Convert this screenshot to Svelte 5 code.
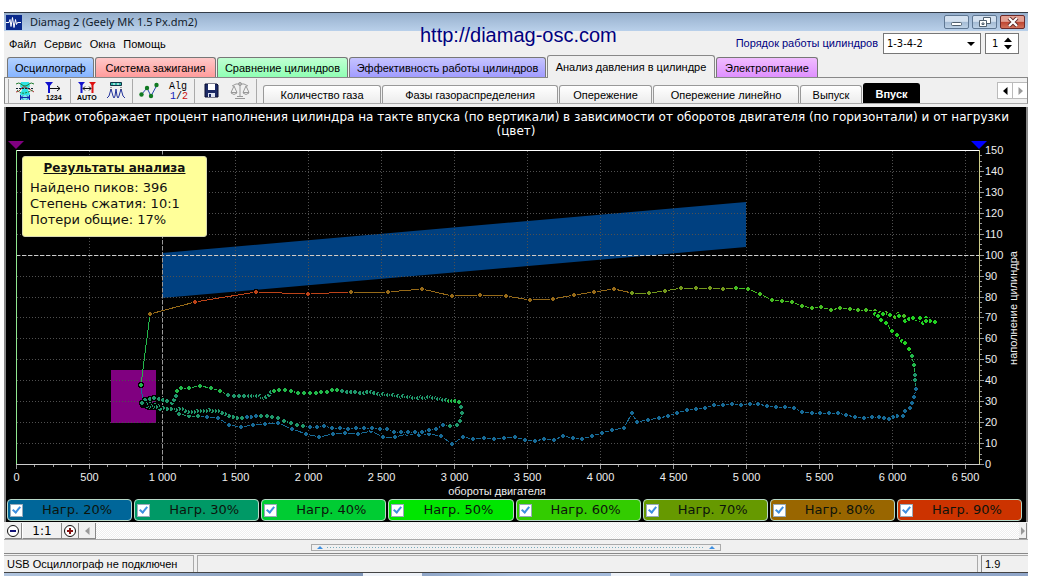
<script>
  let activeTab = $state('Анализ давления в цилиндре');
  let activeView = $state('Впуск');
  let firingOrder = $state('1-3-4-2');
  let cylinder = $state(1);

  const menu = ['Файл', 'Сервис', 'Окна', 'Помощь'];

  const tabs = [
    { name: 'Осциллограф', tone: 'blue', width: 87 },
    { name: 'Система зажигания', tone: 'red', width: 121 },
    { name: 'Сравнение цилиндров', tone: 'green', width: 131 },
    { name: 'Эффективность работы цилиндров', tone: 'violet', width: 197 },
    { name: 'Анализ давления в цилиндре', tone: 'plain', width: 168 },
    { name: 'Электропитание', tone: 'pink', width: 102 }
  ];

  const views = [
    { name: 'Количество газа', width: 118 },
    { name: 'Фазы газораспределения', width: 176 },
    { name: 'Опережение', width: 93 },
    { name: 'Опережение линейно', width: 146 },
    { name: 'Выпуск', width: 62 },
    { name: 'Впуск', width: 57 }
  ];

  let loads = $state([
    { value: 20, color: '#006699', on: true },
    { value: 30, color: '#009966', on: true },
    { value: 40, color: '#00cc33', on: true },
    { value: 50, color: '#00e600', on: true },
    { value: 60, color: '#33cc00', on: true },
    { value: 70, color: '#669900', on: true },
    { value: 80, color: '#996600', on: true },
    { value: 90, color: '#cc3300', on: true }
  ]);

  const dotColors = {
    20: '#176a96',
    30: '#1f966a',
    40: '#22b84a',
    50: '#22d022',
    60: '#46bd22',
    70: '#74991c',
    80: '#976a18',
    90: '#bd4318'
  };

  // each run: load %, then x,y pairs in drawing units
  const acceleration = [
    [20, '143,403'],
    [40, '141,385'],
    [80, '150,314'],
    [90, '195,302 256,292 308,294'],
    [80, '351,292 388,292 422,289 452,296 480,295 506,296 530,300 553,299 574,295 594,292 614,289'],
    [70, '632,293 649,293 665,291 681,288 696,288 710,288 723,289'],
    [60, '736,288 748,289 760,294 772,300 782,301 792,302 802,306 812,308 821,307 831,310 840,308 850,309 858,310 866,310 875,311 880,313 882,316 886,313 891,316 895,317 898,314 900,316 904,316'],
    [50, '905,321 909,319 914,317 916,319 919,318 921,321 923,323 926,318 927,322 930,321 935,322 926,321 920,318 913,318 899,316 890,315 883,314 875,314 878,316 881,320 886,323 892,331 897,335 902,341'],
    [50, '905,343 909,349'],
    [40, '912,356 914,365'],
    [30, '915,375 915,380'],
    [20, '916,389 914,397 912,403 910,408 905,411 903,416 897,416 893,417 889,419 884,418 879,417 872,417 864,418 855,417 846,415 838,413 829,413 820,413 812,413 802,412 794,408 785,407 776,407 767,406 758,404 750,404 741,405 732,404 723,405 714,405 705,408 696,409 687,410 677,413 668,416 659,418 648,420 637,422 632,413 624,428 612,430 602,433 592,436 582,439 573,438 563,436 554,440 544,439 535,441 525,440 515,437 504,438 494,439 484,438 473,439 463,437 452,444 441,436 429,434 419,435 407,434 395,437 383,437 371,431 358,434 345,433 333,434 319,437 306,434 292,429 278,423 265,424 253,425 241,427 229,425 218,418 207,417'],
    [30, '198,416 189,416 179,414 175,410 170,409 163,408 155,405 149,402 146,405']
  ];

  const partLoad = [
    [30, '143,405 145,400 150,399 154,398 159,399 163,400 167,401 172,403 174,400 176,396'],
    [40, '177,391 181,388 189,388 200,386 211,388 220,391'],
    [30, '228,395 234,396 239,396 244,396 249,396 252,396 255,396 257,396 260,396 262,398 264,398 266,397 269,395 271,392'],
    [40, '274,391 279,390 285,390 291,391 298,393 304,393 310,393 316,393 321,392 327,392 332,390 337,390'],
    [30, '342,391 347,392 351,392 355,392 360,393 364,393 367,392 371,392 374,393 378,394 381,395 383,394 386,395 388,395 391,395 393,395 396,396 398,396 401,397 403,396 406,397 408,397 411,397 413,398 416,398 418,398 421,397 423,398 426,398 428,397 431,397 433,398 436,398 438,399 441,399 443,400 446,400'],
    [40, '449,401 452,401 455,401 459,402'],
    [30, '461,407 462,413 460,421 457,425 450,426'],
    [20, '443,425 436,429 429,430 422,432 415,432 408,432 401,432 394,432 387,429 380,429 372,428 364,428 356,428 348,429 340,428 332,428 324,426 317,427 310,427'],
    [30, '303,426 297,425 291,423 284,421 278,418 272,417 267,416 261,416'],
    [20, '256,416 251,417 247,417'],
    [30, '242,418 237,418 233,417 229,416 225,414 222,413 218,411 215,411 212,411 209,410 206,411 203,411 200,411 197,411 194,412 191,412 188,412 185,411 182,409 179,409 176,410 173,409 171,409 167,409 163,408 160,409 158,406 156,407 153,407 151,406 149,407 147,406 146,404 144,405 143,404 142,403']
  ];

  function expand(runs) {
    return runs.flatMap(([load, pairs]) =>
      pairs.split(' ').map((pair) => {
        const [x, y] = pair.split(',').map(Number);
        return { x, y, load };
      })
    );
  }

  const traces = [expand(acceleration), expand(partLoad)];

  const px = (rpm) => Math.round(16 + rpm * 0.146) + 0.5;
  const py = (percent) => Math.round(464 - percent * 2.093) + 0.5;
  const spaced = (n) => (n >= 1000 ? `${Math.floor(n / 1000)} ${String(n % 1000).padStart(3, '0')}` : n);

  const xTicks = Array.from({ length: 14 }, (_, i) => i * 500);
  const xMinor = Array.from({ length: 53 }, (_, i) => i * 125);
  const yTicks = Array.from({ length: 16 }, (_, i) => i * 10);
  const yMinor = Array.from({ length: 60 }, (_, i) => i * 2.5);

  const isOn = (load) => loads.find((l) => l.value === load).on;
</script>

<div class="desktop">
  <div class="window">
    <header class="titlebar">
      <svg class="app-icon" width="16" height="15" viewBox="0 0 16 15">
        <rect width="16" height="15" fill="#0a2a8c" />
        <path d="M0 7.500h3l1-3 1 7 1.500-9 1.500 10 1.500-8 1 5 1-2h3.500" fill="none" stroke="#fff" />
      </svg>
      <span class="caption">Diamag 2 (Geely MK 1.5 Px.dm2)</span>
      <button class="win" aria-label="Свернуть">
        <svg width="12" height="10" viewBox="0 0 12 10"><rect x=".5" y="5.500" width="10" height="3" rx="1" fill="#fff" stroke="#51606f" /></svg>
      </button>
      <button class="win" aria-label="Восстановить">
        <svg width="12" height="12" viewBox="0 0 12 12" fill="#fff" stroke="#51606f"><path d="M4.500 1.500h7v6h-7z" /><path d="M.5 4.500h7v6h-7z" /><path d="M3 7h2v1.500H3z" /></svg>
      </button>
      <button class="win close" aria-label="Закрыть">
        <svg width="12" height="10" viewBox="0 0 12 10"><path d="M2 1l8 8M10 1L2 9" stroke="#5d2a2a" stroke-width="4" /><path d="M2 1l8 8M10 1L2 9" stroke="#fff" stroke-width="2.200" /></svg>
      </button>
    </header>
    <a class="site" href="http://diamag-osc.com">http://diamag-osc.com</a>

    <div class="menubar">
      <nav>
        {#each menu as item}
          <button>{item}</button>
        {/each}
      </nav>
      <label class="order" for="order">Порядок работы цилиндров</label>
      <div class="combo">
        <select id="order" bind:value={firingOrder}>
          <option>1-3-4-2</option>
          <option>1-2-4-3</option>
        </select>
      </div>
      <div class="spin">
        <input type="number" min="1" max="4" aria-label="Цилиндр" bind:value={cylinder} />
        <svg width="8" height="13" viewBox="0 0 8 13"><path d="M0 5l4-4.500L8 5zM0 8h8l-4 4.500z" /></svg>
      </div>
    </div>

    <div class="tabs" role="tablist">
      {#each tabs as tab}
        <button
          role="tab"
          class={tab.tone}
          class:active={tab.name === activeTab}
          aria-selected={tab.name === activeTab}
          style:width="{tab.width}px"
          onclick={() => (activeTab = tab.name)}>{tab.name}</button>
      {/each}
    </div>

    <div class="toolbar">
      <div class="group">
        <button aria-label="Наложение">
          <svg width="20" height="20" viewBox="0 0 20 20" fill="none">
            <path d="M6 1h8l1 4-2 4 2 4v1H5v-1l2-4-2-4z" fill="#2fe3e3" />
            <path d="M1 3q3-2 5 0t4 2 4-2 5 0" stroke="#1c7a2c" />
            <path d="M1 11q3 0 5-3t4-2 4 2 5 3" stroke="#a33" />
            <path d="M1 7.500h18" stroke="#123" stroke-dasharray="2 1" />
            <path d="M2 9q4 4 8 3t8-3" stroke="#1c7a2c" stroke-dasharray="2 1" />
            <path d="M5 14h10v5H5z" fill="#7feaea" />
            <path d="M5.500 14v5M14.500 14v5M6 16.500h8M8 14.500l-2 2 2 2M12 14.500l2 2-2 2" stroke="#12a" />
          </svg>
        </button>
        <button aria-label="Метки цилиндров">
          <svg width="20" height="20" viewBox="0 0 20 20" fill="none">
            <path d="M1 1h8L5 6z" fill="#11c" />
            <path d="M5 4v8" stroke="#11c" stroke-width="2" />
            <path d="M6 7.500h10M13 5l3 2.500-3 2.500" stroke="#111" />
            <text x="2" y="19" class="tiny">1234</text>
          </svg>
        </button>
      </div>
      <div class="group">
        <button aria-label="Автоматические маркеры">
          <svg width="20" height="20" viewBox="0 0 20 20" fill="none">
            <path d="M1 1h7L4.500 5z" fill="#11c" /><path d="M4.500 3v9" stroke="#11c" stroke-width="2" />
            <path d="M12 1h7l-3.500 4z" fill="#d11" /><path d="M15.500 3v9" stroke="#d11" stroke-width="2" />
            <path d="M6 7.500h8M8 5.500l-2 2 2 2M12 5.500l2 2-2 2" stroke="#111" />
            <text x="0" y="19" class="tiny">AUTO</text>
          </svg>
        </button>
        <button aria-label="Пики">
          <svg width="20" height="20" viewBox="0 0 20 20" fill="none">
            <path d="M4.500 1.500h11v3h-11z" fill="#2db8a8" stroke="#134" />
            <path d="M8 2v2M12 2v2" stroke="#fff" />
            <path d="M1 17l2-2 2-7 2 7 1 2 1-2 1-7 1 7 1 2 1-2 2-7 2 7 2 2" stroke="#24349c" />
            <path d="M5 6v4M15 6v4" stroke="#444" stroke-dasharray="1 1" />
          </svg>
        </button>
      </div>
      <div class="group">
        <button aria-label="График">
          <svg width="20" height="20" viewBox="0 0 20 20" fill="none">
            <path d="M2 14l6-7 4 8 6-11" stroke="#24a" />
            <g fill="#117a22"><circle cx="2.500" cy="13.500" r="2.200" /><circle cx="8" cy="7" r="2.200" /><circle cx="12" cy="15" r="2.200" /><circle cx="17.500" cy="4" r="2.200" /></g>
          </svg>
        </button>
        <button aria-label="Алгоритм">
          <svg width="20" height="20" viewBox="0 0 20 20">
            <text x="1" y="8" class="alg">Alg</text>
            <text x="2" y="18" class="alg"><tspan fill="#1122bb">1</tspan>/<tspan fill="#cc1111">2</tspan></text>
          </svg>
        </button>
      </div>
      <div class="group">
        <button aria-label="Сохранить">
          <svg width="20" height="20" viewBox="0 0 20 20">
            <path d="M4 3h12l1 1v12H4z" fill="#1c2a66" stroke="#0a0f30" />
            <path d="M7 3h7v6H7z" fill="#fff" /><path d="M7 12h7v4H7z" fill="#dfe4f2" /><path d="M8 13h2v3H8z" fill="#1c2a66" />
          </svg>
        </button>
        <button aria-label="Сравнить">
          <svg width="20" height="20" viewBox="0 0 20 20" fill="none" stroke="#999">
            <path d="M10 2v14M5 17.500h10M7 15.500h6M2 5l4-2h8l4 2" />
            <path d="M4 5L1 11.500h6L4 5M16 5l-3 6.500h6L16 5M1 12q3 3 6 0M13 12q3 3 6 0" />
            <circle cx="10" cy="3" r="1.500" fill="#bbb" />
          </svg>
        </button>
      </div>
      <div class="views" role="tablist">
        {#each views as view}
          <button
            role="tab"
            class:active={view.name === activeView}
            aria-selected={view.name === activeView}
            style:width="{view.width}px"
            onclick={() => (activeView = view.name)}>{view.name}</button>
        {/each}
      </div>
      <div class="pager">
        <button aria-label="Назад"><svg width="5" height="8" viewBox="0 0 5 8"><path d="M4.500 0v8L0 4z" /></svg></button>
        <button aria-label="Вперёд"><svg width="5" height="8" viewBox="0 0 5 8"><path d="M.5 0v8L5 4z" fill="#999" /></svg></button>
      </div>
    </div>

    <main>
      <h1>График отображает процент наполнения цилиндра на такте впуска (по вертикали) в зависимости от оборотов двигателя (по горизонтали) и от нагрузки (цвет)</h1>

      <div class="chart">
        <svg class="plot" viewBox="6 140 1020 358">
          <polygon points="162,253 746,202 746,247 162,298" fill="#004080" />
          <rect x="111" y="370" width="45" height="53" fill="#800080" />

          <g class="grid">
            {#each xTicks.slice(1) as rpm}
              <line x1={px(rpm)} x2={px(rpm)} y1="151" y2="464" />
            {/each}
            {#each yTicks.slice(1, -1) as percent}
              <line x1="17" x2="979" y1={py(percent)} y2={py(percent)} />
            {/each}
          </g>
          <path d="M16 255.500H979" class="reference" />
          <path d="M162.500 150V464" class="reference dim" />

          {#each traces as trace}
            <g class="trace">
              {#each trace.slice(1) as p, i}
                {#if isOn(trace[i].load)}
                  <line x1={trace[i].x} y1={trace[i].y} x2={p.x} y2={p.y} stroke={dotColors[trace[i].load]} />
                {/if}
              {/each}
              {#each trace as p}
                {#if isOn(p.load)}
                  <path d="M{p.x - 1} {p.y - 2}h2v1h1v2h-1v1h-2v-1h-1v-2h1z" class="dot" fill={dotColors[p.load]} />
                {/if}
              {/each}
            </g>
          {/each}

          <path d="M16 150.500H979" stroke="#fff" />
          <path d="M16.500 150V464" stroke="#90e890" />
          <path d="M979.500 150V464" stroke="#cccc88" />
          <path d="M16 464.500H984" stroke="#ccc" />
          <path d="M8 141h16l-8 8z" fill="#800080" />
          <path d="M971 141h16l-8 8z" fill="#0000ff" />

          <g stroke="#999">
            {#each xMinor as rpm}
              <line x1={px(rpm)} x2={px(rpm)} y1="465" y2={rpm % 500 ? 467 : 469} />
            {/each}
            {#each yMinor as percent}
              <line x1="980" x2={percent % 10 ? 982 : 984} y1={py(percent)} y2={py(percent)} />
            {/each}
          </g>
          <g class="axis">
            {#each xTicks as rpm}
              <text x={px(rpm)} y="481" text-anchor="middle">{spaced(rpm)}</text>
            {/each}
            {#each yTicks as percent}
              <text x="985" y={py(percent) + 3.5}>{percent}</text>
            {/each}
          </g>
          <text class="name" x="497" y="495" text-anchor="middle">обороты двигателя</text>
          <text class="name" transform="translate(1017 308) rotate(-90)" text-anchor="middle">наполнение цилиндра</text>
        </svg>

        <section class="results">
          <h2>Результаты анализа</h2>
          <p>Найдено пиков: 396</p>
          <p>Степень сжатия: 10:1</p>
          <p>Потери общие: 17%</p>
        </section>
      </div>

      <div class="legend">
        {#each loads as load}
          <label style:background={load.color}>
            <input type="checkbox" bind:checked={load.on} />
            <span>Нагр. {load.value}%</span>
          </label>
        {/each}
      </div>
    </main>

    <div class="zoombar">
      <button aria-label="Уменьшить"><svg width="14" height="14" viewBox="0 0 14 14"><circle cx="7" cy="7" r="5.500" fill="#fff" stroke="#111" /><path d="M4 7h6" stroke="#117" stroke-width="2" /></svg></button>
      <button class="ratio">1:1</button>
      <button aria-label="Увеличить"><svg width="14" height="14" viewBox="0 0 14 14"><circle cx="7" cy="7" r="5.500" fill="#fff" stroke="#111" /><path d="M4 7h6M7 4v6" stroke="#811" stroke-width="2" /></svg></button>
      <button aria-label="Влево"><svg width="5" height="8" viewBox="0 0 5 8"><path d="M4.500 0v8L0 4z" fill="#999" /></svg></button>
      <div class="track"></div>
      <button class="end" aria-label="Вправо"><svg width="4" height="8" viewBox="0 0 4 8"><path d="M0 0v8l4-4z" fill="#999" /></svg></button>
    </div>

    <div class="splitter">
      <button aria-label="Развернуть панель"><i></i><span></span><i></i></button>
    </div>

    <footer>
      <span class="state">USB Осциллограф не подключен</span>
      <span class="info"></span>
      <span class="version">1.9</span>
    </footer>
  </div>
  <div class="taskbar"><span></span><span></span></div>
</div>

<style>
  :global(body) {
    margin: 0;
    background: #fff;
  }

  .desktop {
    display: flex;
    flex-direction: column;
    min-height: 100vh;
    box-sizing: border-box;
    padding: 12px 12px 0 4px;
    font: 12px/14px 'Liberation Sans', Arial, sans-serif;
    color: #000;
    overflow: hidden;
  }

  button {
    font: inherit;
    color: inherit;
    border: 0;
    padding: 0;
    margin: 0;
    background: none;
  }

  .window {
    position: relative;
    display: flex;
    flex-direction: column;
    background: #f0f0f0;
  }

  .titlebar {
    display: flex;
    align-items: center;
    height: 18px;
    gap: 3px;
    padding: 0 3px 0 2px;
    border-top: 1px solid #333c48;
    background: linear-gradient(#97b0cd, #b9d0ea);
  }

  .app-icon {
    flex: none;
  }

  .caption {
    flex: 1;
    padding-left: 5px;
    font: 11px/16px 'Noto Sans', sans-serif;
    color: #111c2c;
  }

  .win {
    display: flex;
    align-items: center;
    justify-content: center;
    width: 25px;
    height: 14px;
    box-sizing: border-box;
    border: 1px solid #5f7793;
    border-radius: 2px;
    background: linear-gradient(#d3e0ef 45%, #a3bad4 50%, #bdd1e6);
  }

  .close {
    border-color: #6b2a2a;
    background: linear-gradient(#e3a093 45%, #bf4531 50%, #d2715a);
  }

  .site {
    position: absolute;
    top: 11px;
    left: 416px;
    font-size: 20px;
    line-height: 24px;
    color: #000080;
    text-decoration: none;
  }

  .menubar {
    display: flex;
    align-items: center;
    height: 24px;
    padding-right: 9px;
    font-size: 11px;
  }

  nav {
    display: flex;
    flex: 1;
    gap: 8px;
    padding: 2px 0 0 5px;
  }

  .order {
    color: #000080;
    margin-right: 5px;
  }

  .combo {
    position: relative;
    margin-right: 4px;
  }

  .combo::after {
    content: '';
    position: absolute;
    right: 6px;
    top: 9px;
    border: 4px solid transparent;
    border-top-color: #000;
    border-bottom: 0;
    pointer-events: none;
  }

  select {
    appearance: none;
    display: block;
    width: 98px;
    height: 21px;
    padding: 0 3px;
    border: 1px solid #777;
    border-radius: 0;
    background: #fff;
    font: 11px 'DejaVu Sans Condensed', 'DejaVu Sans', sans-serif;
    color: #000;
  }

  .spin {
    display: flex;
    align-items: center;
    width: 34px;
    height: 21px;
    box-sizing: border-box;
    padding-right: 6px;
    border: 1px solid #777;
    background: #fff;
  }

  .spin input {
    appearance: textfield;
    flex: 1;
    min-width: 0;
    padding: 0 0 0 6px;
    border: 0;
    font: 11px 'DejaVu Sans Condensed', 'DejaVu Sans', sans-serif;
    outline: 0;
  }

  .spin input::-webkit-inner-spin-button {
    display: none;
  }

  .tabs {
    display: flex;
    align-items: flex-end;
    gap: 1px;
    height: 22px;
    padding-left: 3px;
    border-bottom: 1px solid #888;
    font-size: 11px;
  }

  .tabs button {
    height: 20px;
    box-sizing: border-box;
    border: 1px solid #777;
    border-bottom: 0;
    border-radius: 3px 3px 0 0;
    white-space: nowrap;
  }

  .tabs .active {
    height: 23px;
    margin-bottom: -1px;
    background: #f0f0f0;
    border-color: #888;
  }

  .blue { background: linear-gradient(#b3d2ff, #86b4ff); }
  .red { background: linear-gradient(#ffc8c8, #ff9c9c); }
  .green { background: linear-gradient(#c0ffd2, #90ffb4); }
  .violet { background: linear-gradient(#c6c4ff, #a19cff); }
  .plain { background: #f0f0f0; }
  .pink { background: linear-gradient(#f0bcff, #df90ff); }

  .toolbar {
    display: flex;
    align-items: center;
    height: 25px;
    padding-left: 3px;
    border-left: 1px solid #888;
    border-right: 1px solid #888;
    border-bottom: 1px solid #aaa;
  }

  .group {
    display: flex;
    gap: 9px;
    padding: 2px 6px;
    height: 20px;
    border-right: 1px solid #aaa;
  }

  .group:first-child {
    border-left: 1px solid #aaa;
  }

  .group button,
  .group svg {
    display: block;
    width: 20px;
    height: 20px;
  }

  .tiny {
    font: bold 7px 'Liberation Sans', sans-serif;
    fill: #000;
  }

  .alg {
    font: 10px 'Liberation Mono', monospace;
    fill: #000;
  }

  .views {
    display: flex;
    align-items: flex-end;
    align-self: stretch;
    flex: 1;
    gap: 1px;
    padding-left: 6px;
    font-size: 11px;
  }

  .views button {
    height: 18px;
    box-sizing: border-box;
    border: 1px solid #999;
    border-bottom: 0;
    border-radius: 3px 3px 0 0;
    background: linear-gradient(#fff, #ececec);
    white-space: nowrap;
  }

  .views .active {
    height: 20px;
    border-color: #000;
    background: #000;
    color: #fff;
    font-weight: bold;
  }

  .pager {
    display: flex;
  }

  .pager button {
    width: 15px;
    height: 17px;
    border: 1px solid #bbb;
    border-right: 0;
    background: #fff;
  }

  main {
    margin-top: 3px;
    padding: 3px 0 1px;
    border-left: 2px solid #888;
    border-right: 2px solid #888;
    background: #000;
    color: #fff;
  }

  h1 {
    margin: 0;
    padding-bottom: 2px;
    font: 12px/14px 'DejaVu Sans', Verdana, sans-serif;
    text-align: center;
  }

  .chart {
    position: relative;
  }

  .plot {
    display: block;
    width: 100%;
  }

  .grid line {
    stroke: #505050;
    stroke-dasharray: 1 2;
  }

  .reference {
    fill: none;
    stroke: #ccc;
    stroke-dasharray: 4 2;
  }

  .dim {
    stroke: #999;
  }

  .trace {
    shape-rendering: crispEdges;
  }

  .dot {
    stroke: #000;
    stroke-width: 2px;
    paint-order: stroke;
  }

  .axis text,
  .name {
    font: 11px 'Liberation Sans', Arial, sans-serif;
    fill: #eee;
  }

  .results {
    position: absolute;
    left: 16px;
    top: 16px;
    width: 185px;
    height: 81px;
    box-sizing: border-box;
    padding: 3px 7px;
    border: 1px solid #d8d8b0;
    border-radius: 3px;
    background: #ffff99;
    color: #111;
    font: 13px/16px 'DejaVu Sans', Verdana, sans-serif;
  }

  h2 {
    margin: 0 0 4px;
    font-size: 12px;
    text-align: center;
    text-decoration: underline;
  }

  p {
    margin: 0;
  }

  .legend {
    display: flex;
    gap: 2px;
    padding: 1px 4px 0 1px;
  }

  .legend label {
    display: flex;
    flex: 1;
    align-items: center;
    height: 20px;
    padding-left: 2px;
    border: 1px solid #b8d8c8;
    border-radius: 4px;
    font: 13px/16px 'DejaVu Sans', Verdana, sans-serif;
    color: #0c140c;
  }

  .legend span {
    flex: 1;
    text-align: center;
  }

  .legend input {
    appearance: none;
    position: relative;
    width: 13px;
    height: 13px;
    box-sizing: border-box;
    margin: 0;
    border: 1px solid #9ab;
    background: #fff;
  }

  .legend input:checked::after {
    content: '';
    position: absolute;
    left: 3px;
    top: 0;
    width: 3px;
    height: 6px;
    border: solid #3f8fe0;
    border-width: 0 2px 2px 0;
    transform: rotate(40deg);
  }

  .zoombar {
    display: flex;
    height: 16px;
    padding: 1px 1px 0;
    border-bottom: 1px solid #aaa;
  }

  .zoombar button {
    display: flex;
    align-items: center;
    justify-content: center;
    width: 17px;
    border-right: 1px solid #888;
    border-bottom: 1px solid #888;
  }

  .zoombar .ratio {
    width: 40px;
    border-left: 1px solid #fff;
    font: 12px/14px 'DejaVu Sans', Verdana, sans-serif;
  }

  .zoombar .end {
    width: 8px;
  }

  .track {
    flex: 1;
    background: repeating-conic-gradient(#fff 0 25%, #eee 0 50%) 0 0 / 2px 2px;
  }

  .splitter {
    display: flex;
    justify-content: center;
    padding: 4px 0 2px;
    border-bottom: 1px solid #888;
  }

  .splitter button {
    display: flex;
    align-items: center;
    gap: 4px;
    width: 40%;
    height: 7px;
    box-sizing: border-box;
    padding: 0 5px;
    border: 1px solid #aaa;
  }

  .splitter i {
    border: 3px solid transparent;
    border-top: 0;
    border-bottom-color: #3f8fe0;
  }

  .splitter span {
    flex: 1;
    height: 1px;
    background: repeating-linear-gradient(90deg, #7ab 0 1px, transparent 1px 3px);
  }

  footer {
    display: flex;
    gap: 3px;
    padding-top: 1px;
    height: 17px;
    font-size: 11px;
    line-height: 16px;
  }

  footer span {
    border-top: 1px solid #aaa;
    border-right: 1px solid #aaa;
  }

  .state {
    width: 186px;
    padding-left: 3px;
    white-space: nowrap;
  }

  .info {
    flex: 1;
    border-left: 1px solid #aaa;
  }

  footer .version {
    width: 43px;
    padding-left: 3px;
    border-left: 1px solid #888;
    border-right: 0;
  }

  .taskbar {
    display: flex;
    flex: 1;
    justify-content: center;
    gap: 189px;
    min-height: 3px;
    border-top: 1px solid #444;
    background: linear-gradient(90deg, #b0c4de, #7f96b8 35%, #a9c0e0 50%, #8fa5c8);
  }

  .taskbar span {
    width: 59px;
    background: #eef2f8;
  }
</style>
